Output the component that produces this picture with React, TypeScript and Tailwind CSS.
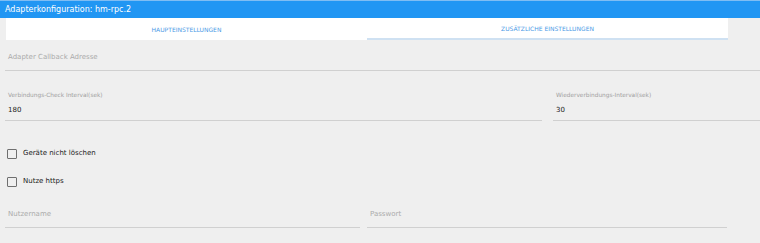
import React from 'react';

const font = { fontFamily: '"DejaVu Sans", Verdana, sans-serif' };

function Field({ label, value, placeholder, className = '', rowClass = 'h-[19px]' }: { label?: string; value?: string; placeholder?: string; className?: string; rowClass?: string }) {
  return (
    <div className={`flex flex-col ${className}`}>
      {label ? <div className="h-[8px] flex items-center text-[5.8px] text-[#a0a0a0] pl-[3px]">{label}</div> : null}
      <div className={`flex items-center pl-[3px] ${rowClass} ${value ? 'text-[7px] text-[#222]' : 'text-[7px] text-[#ababab]'}`}>
        {value ?? placeholder}
      </div>
      <div className="h-px bg-[#d0d0d0]" />
    </div>
  );
}

function Check({ label }: { label: string }) {
  return (
    <label className="flex items-center gap-[6px] pl-[7px] h-[11px]">
      <span className="w-[10px] h-[10px] border border-[#6f6f6f] rounded-[1px]" />
      <span className="text-[7px] text-[#1a1a1a]">{label}</span>
    </label>
  );
}

export default function App() {
  return (
    <div className="w-[760px] h-[243px] bg-[#efefef] overflow-hidden" style={font}>
      <div className="h-[18px] bg-[#2196f3] border-t border-[#7fbdf3] flex items-center pl-[5px] text-white text-[8px]">
        Adapterkonfiguration: hm-rpc.2
      </div>
      <div className="ml-[6px] w-[722px] h-[22px] bg-white flex text-[6px] text-[#4a9ae6]">
        <div className="flex-1 flex items-center justify-center pt-[1px]">HAUPTEINSTELLUNGEN</div>
        <div className="flex-1 flex items-center justify-center pt-[1px] border-b-2 border-[#cfe1f2]">ZUSÄTZLICHE EINSTELLUNGEN</div>
      </div>
      <div className="pl-[5px] pt-[7px]">
        <Field placeholder="Adapter Callback Adresse" className="w-[755px]" rowClass="h-[23px] pb-[3px]" />
        <div className="flex gap-[11px] mt-[20px]">
          <Field label="Verbindungs-Check Interval(sek)" value="180" className="w-[537px]" rowClass="h-[21px] pt-[2px]" />
          <Field label="Wiederverbindungs-Interval(sek)" value="30" className="flex-1" rowClass="h-[21px] pt-[2px]" />
        </div>
        <div className="flex flex-col gap-[17px] mt-[27px] -ml-[5px]">
          <Check label="Geräte nicht löschen" />
          <Check label="Nutze https" />
        </div>
        <div className="flex gap-[7px] mt-[18px]">
          <Field placeholder="Nutzername" className="w-[355px]" rowClass="h-[22px] pb-[4px]" />
          <Field placeholder="Passwort" className="w-[360px]" rowClass="h-[22px] pb-[4px]" />
        </div>
      </div>
    </div>
  );
}
